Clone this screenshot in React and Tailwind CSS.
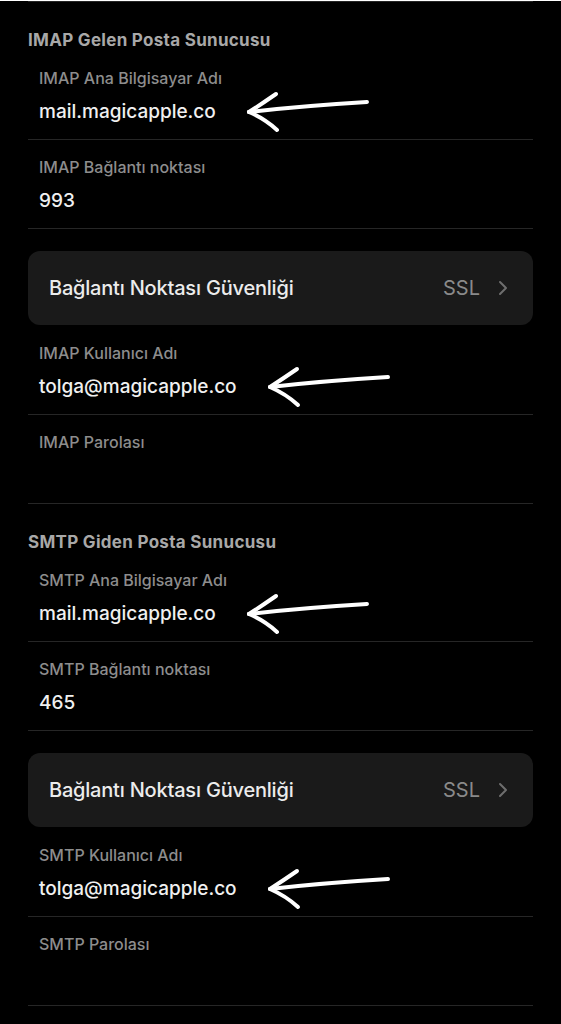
import React from "react"

// hand-drawn annotation arrow pointing left
function Arrow() {
  return (
    <svg width="125" height="42" viewBox="0 0 125 42" fill="none" className="ml-[30px] shrink-0">
      <path d="M3 21 Q55 15 121 11" stroke="white" strokeWidth="4" strokeLinecap="round" />
      <path d="M3 21 Q17 12 30 3" stroke="white" strokeWidth="4" strokeLinecap="round" />
      <path d="M3 21 Q19 28 31 39" stroke="white" strokeWidth="4" strokeLinecap="round" />
    </svg>
  )
}

function Field({ label, value, arrow, first }) {
  return (
    <div className={`pl-[11px] ${first ? "pt-[17px]" : "pt-[16px]"} pb-[14px] border-b border-[#262626]`}>
      <div className="text-[16px] leading-[22px] font-medium text-[#8d8d8d]">{label}</div>
      <div className="mt-[10px] h-[26px] flex items-center">
        <span className="text-[19px] leading-[26px] font-medium text-[#f0f0f0]">{value}</span>
        {arrow && <Arrow />}
      </div>
    </div>
  )
}

function SecurityCard() {
  return (
    <div className="mt-[22px] h-[74px] rounded-[12px] bg-[#1a1a1a] flex items-center pl-[21px] pr-[25px]">
      <span className="text-[20px] font-medium text-[#ececec] tracking-[-0.2px]">Bağlantı Noktası Güvenliği</span>
      <span className="ml-auto text-[20px] text-[#8a8a8a]">SSL</span>
      <svg width="10" height="16" viewBox="0 0 10 16" fill="none" className="ml-[18px]">
        <path d="M2 2 L8 8 L2 14" stroke="#6e6e6e" strokeWidth="2" strokeLinecap="round" strokeLinejoin="round" />
      </svg>
    </div>
  )
}

function Section({ title, proto, port }) {
  return (
    <div>
      <div className="pt-[27px] text-[17px] leading-[22px] font-bold tracking-[0.3px] text-[#a8a8a8]">{title}</div>
      <Field label={`${proto} Ana Bilgisayar Adı`} value="mail.magicapple.co" arrow />
      <Field label={`${proto} Bağlantı noktası`} value={port} />
      <SecurityCard />
      <Field label={`${proto} Kullanıcı Adı`} value="tolga@magicapple.co" arrow first />
      <Field label={`${proto} Parolası`} value="" />
    </div>
  )
}

export default function App() {
  return (
    <div className="min-h-screen bg-black" style={{ fontFamily: "Inter, 'Noto Sans', sans-serif" }}>
      <div className="px-[28px]">
        <div className="mt-px h-px bg-[#262626]" />
        <Section title="IMAP Gelen Posta Sunucusu" proto="IMAP" port="993" />
        <Section title="SMTP Giden Posta Sunucusu" proto="SMTP" port="465" />
      </div>
    </div>
  )
}
